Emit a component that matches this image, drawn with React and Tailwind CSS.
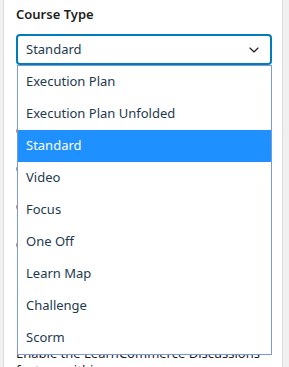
import { ChevronDown } from 'lucide-react';

const opciones = [
    'Execution Plan',
    'Execution Plan Unfolded',
    'Standard',
    'Video',
    'Focus',
    'One Off',
    'Learn Map',
    'Challenge',
    'Scorm',
];

const App = () => {
    const seleccionado = 'Standard';

    return (
        <div className="w-[289px] h-[367px] bg-[#f0f0f0] overflow-hidden font-['Noto_Sans',sans-serif]">
            <div className="relative ml-[3px] w-[280px] h-full bg-white border-x border-[#dcdcde] pl-[12px] pr-[10px] pt-[5px]">
                <h3 className="text-[13px] font-semibold text-[#1e1e1e] leading-[18px]">Course Type</h3>

                {/* select cerrado */}
                <div className="mt-[11px] h-[31px] w-[256px] rounded-[4px] border-2 border-[#007cba] flex items-center justify-between pl-[8px] pr-[8px]">
                    <span className="text-[13px] text-[#1e3a50]">{seleccionado}</span>
                    <ChevronDown className="w-[16px] h-[16px] text-[#1e1e1e]" strokeWidth={1.75} />
                </div>

                {/* contenido de fondo, tapado por la lista */}
                <div className="mt-[60px] space-y-[26px] text-[13px] text-[#1e1e1e]">
                    <div className="flex items-center gap-2 h-[12px]"><span className="w-[6px] h-[6px] rounded-full bg-[#d98a3a]" />Allow enrollment</div>
                    <div className="flex items-center gap-2 h-[12px]"><span className="w-[6px] h-[6px] rounded-full bg-[#9a9a9a]" />Show progress</div>
                    <div className="flex items-center gap-2 h-[12px]"><span className="w-[6px] h-[6px] rounded-full bg-[#d98a3a]" />Certificate</div>
                    <div className="flex items-center gap-2 h-[12px]"><span className="w-[6px] h-[6px] rounded-full bg-[#d98a3a]" />Reviews</div>
                </div>
                <div className="absolute left-[12px] top-[345px] text-[13px] leading-[17px] text-[#1e1e1e]">
                    <p>Enable the LearnCommerce Discussions</p>
                    <p>feature within</p>
                </div>

                {/* lista desplegada */}
                <div className="absolute left-[13px] top-[65px] w-[255px] h-[290px] bg-white border border-[#7b9bd6]">
                    {opciones.map(o => (
                        <div
                            key={o}
                            className={`h-[32px] flex items-center pl-[8px] text-[13px] ${o === seleccionado ? 'bg-[#1e90ff] text-white' : 'text-[#1e3a50]'}`}
                        >
                            {o}
                        </div>
                    ))}
                </div>
            </div>
        </div>
    );
};

export default App;
